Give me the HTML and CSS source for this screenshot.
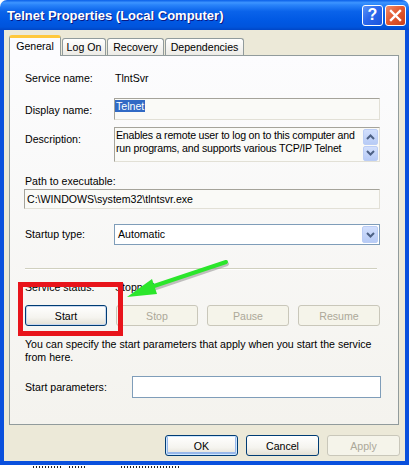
FILE: index.html
```html
<!DOCTYPE html>
<html lang="en">
<head>
  <meta charset="UTF-8" />
  <title>Telnet Properties (Local Computer)</title>
  <link rel="stylesheet" href="styles.css">
</head>
<body>
  <div class="window">
    <div class="titlebar">
      <span class="title">Telnet Properties (Local Computer)</span>
      <div class="caption-buttons">
        <span class="cap-btn help">?</span>
        <span class="cap-btn close">
          <svg width="13" height="13" viewBox="0 0 13 13"><path d="M2 2 L11 11 M11 2 L2 11" stroke="#fff" stroke-width="2.4" stroke-linecap="square"/></svg>
        </span>
      </div>
    </div>

    <div class="client">
      <div class="tabs">
        <div class="tab active">General</div>
        <div class="tab logon">Log On</div>
        <div class="tab recovery">Recovery</div>
        <div class="tab deps">Dependencies</div>
      </div>

      <div class="panel">
        <div class="row row-service">
          <span class="label">Service name:</span>
          <span class="value">TlntSvr</span>
        </div>

        <div class="row row-display">
          <span class="label label-top">Display name:</span>
          <div class="field field-display"><span class="selected">Telnet</span></div>
        </div>

        <div class="row row-desc">
          <span class="label label-top">Description:</span>
          <div class="field field-desc">
            <div class="desc-text">Enables a remote user to log on to this computer and run programs, and supports various TCP/IP Telnet</div>
            <div class="scroller">
              <span class="scroll-btn">
                <svg width="9" height="6" viewBox="0 0 9 6"><path d="M1 5 L4.5 1.5 L8 5" fill="none" stroke="#4D6185" stroke-width="2"/></svg>
              </span>
              <span class="scroll-btn">
                <svg width="9" height="6" viewBox="0 0 9 6"><path d="M1 1 L4.5 4.5 L8 1" fill="none" stroke="#4D6185" stroke-width="2"/></svg>
              </span>
            </div>
          </div>
        </div>

        <div class="row row-path-label">Path to executable:</div>
        <div class="field field-path">C:\WINDOWS\system32\tlntsvr.exe</div>

        <div class="row row-startup">
          <span class="label">Startup type:</span>
          <div class="select">
            <span>Automatic</span>
            <span class="drop-btn">
              <svg width="9" height="6" viewBox="0 0 9 6"><path d="M1 1 L4.5 4.5 L8 1" fill="none" stroke="#4D6185" stroke-width="2"/></svg>
            </span>
          </div>
        </div>

        <div class="separator"></div>

        <div class="row row-status">
          <span class="label">Service status:</span>
          <span class="value">Stopped</span>
        </div>

        <div class="row row-buttons">
          <button class="btn btn-focus">Start</button>
          <button class="btn" disabled>Stop</button>
          <button class="btn" disabled>Pause</button>
          <button class="btn" disabled>Resume</button>
        </div>

        <p class="hint">You can specify the start parameters that apply when you start the service from here.</p>

        <div class="row row-params">
          <span class="label label-wide">Start parameters:</span>
          <div class="input"></div>
        </div>
      </div>

      <div class="footer">
        <button class="btn btn-default">OK</button>
        <button class="btn">Cancel</button>
        <button class="btn" disabled>Apply</button>
      </div>
    </div>

    <div class="highlight-box"></div>
    <svg class="callout" width="409" height="468" viewBox="0 0 409 468">
      <path d="M227 264 L150 290" stroke="#7a7a7a" stroke-opacity="0.45" stroke-width="4" stroke-linecap="round"/>
      <path d="M226 262 L148 288" stroke="#2BE62B" stroke-width="4" stroke-linecap="round"/>
      <polygon points="127,297 152,279 157,294" fill="#2BE62B"/>
    </svg>
  </div>

  <div class="behind">
    <span class="frag frag-a"></span>
    <span class="frag frag-b"></span>
    <span class="frag frag-c"></span>
  </div>
</body>
</html>
```

FILE: styles.css
```css
* {
  box-sizing: border-box;
}

body {
  margin: 0;
  background: #fff;
  font-family: "Liberation Sans", Arial, sans-serif;
  font-size: 10.6px;
  color: #000;
}

.window {
  position: relative;
  width: 409px;
}

/* title bar */
.titlebar {
  height: 30px;
  border-radius: 7px 7px 0 0;
  background: linear-gradient(to bottom, #0A5FE8 0%, #3D95FF 9%, #2A84FA 16%, #0A63EA 38%, #0058E3 70%, #0054DC 90%, #0046C6 100%);
  display: flex;
  align-items: center;
  justify-content: space-between;
  padding: 0 3px 0 7px;
}

.title {
  color: #fff;
  font-weight: bold;
  font-size: 13px;
  text-shadow: 1px 1px 0 #0A1883;
}

.caption-buttons {
  display: flex;
  gap: 2px;
}

.cap-btn {
  width: 21px;
  height: 21px;
  border: 1px solid #fff;
  border-radius: 3px;
  display: flex;
  align-items: center;
  justify-content: center;
}

.help {
  background: linear-gradient(135deg, #5B93F7 0%, #2C68EC 45%, #1A55DD 100%);
  color: #fff;
  font-weight: bold;
  font-size: 16px;
}

.close {
  background: linear-gradient(135deg, #F08C6C 0%, #E35B32 45%, #C8401A 100%);
}

/* dialog body */
.client {
  height: 435px;
  background: #ECE9D8;
  border: 4px solid #0A50DD;
  border-top: 0;
  padding-top: 5px;
}

.tabs {
  display: flex;
  align-items: flex-end;
  height: 21px;
  padding-left: 5px;
  position: relative;
  z-index: 1;
}

.tab {
  height: 17px;
  margin-bottom: 1px;
  margin-left: 1px;
  border: 1px solid #919B9C;
  border-bottom: 0;
  border-radius: 3px 3px 0 0;
  background: linear-gradient(to bottom, #fff, #ECEBE6);
  display: flex;
  align-items: center;
  justify-content: center;
}

.tab.active {
  width: 52px;
  height: 21px;
  margin: 0;
  border-top: 3px solid #FFC83C;
  background: #FCFCFE;
  padding-bottom: 2px;
}

.logon {
  width: 44px;
}

.recovery {
  width: 57px;
}

.deps {
  width: 79px;
}

.panel {
  width: 390px;
  height: 370px;
  margin: -1px 0 0 5px;
  border: 1px solid #919B9C;
  background: linear-gradient(to bottom, #FCFCFE, #F4F3EE);
  padding: 0 18px 0 15px;
}

.row {
  display: flex;
  line-height: 13px;
}

.label {
  width: 89px;
  flex: none;
}

.label-top {
  padding-top: 6px;
}

.label-wide {
  width: 107px;
  padding-top: 5px;
}

.value {
  padding-left: 1px;
}

.row-service {
  margin-top: 16px;
}

.row-display {
  margin-top: 13px;
}

.row-desc {
  margin-top: 7px;
}

.row-path-label {
  margin-top: 13px;
}

.field {
  border: 1px solid;
  border-color: #A5A39A #E2E0D6 #E2E0D6 #A5A39A;
  background: #FAFAF7;
}

.field-display {
  flex: 1;
  height: 22px;
  padding-top: 1px;
}

.selected {
  background: #316AC5;
  color: #fff;
  padding: 0 1px;
}

.field-desc {
  flex: 1;
  height: 35px;
  display: flex;
  padding: 1px 0 0 1px;
  overflow: hidden;
}

.desc-text {
  flex: 1;
  letter-spacing: -0.2px;
  margin-right: -3px;
  height: 26px;
  overflow: hidden;
}

.scroller {
  width: 16px;
  flex: none;
  display: flex;
  flex-direction: column;
  gap: 1px;
  padding-right: 1px;
  position: relative;
}

.scroll-btn,
.drop-btn {
  display: flex;
  align-items: center;
  justify-content: center;
  background: linear-gradient(to bottom, #D2DFFD, #B7CBF6);
  border: 1px solid #BBCDF5;
  border-radius: 2px;
}

.scroll-btn {
  height: 16px;
}

.field-path {
  margin: 1px 0 0 -1px;
  height: 20px;
  line-height: 18px;
  padding-left: 2px;
}

.row-startup {
  margin-top: 15px;
  align-items: center;
}

.select {
  flex: 1;
  height: 21px;
  border: 1px solid #7F9DB9;
  background: #fff;
  display: flex;
  align-items: center;
  justify-content: space-between;
  padding: 1px 1px 1px 3px;
}

.drop-btn {
  width: 16px;
  height: 17px;
}

.separator {
  margin-top: 23px;
  margin-right: 3px;
  height: 2px;
  border-top: 1px solid #D0D0BF;
  border-bottom: 1px solid #fff;
}

.row-status {
  margin-top: 11px;
}

.row-buttons {
  margin-top: 11px;
  justify-content: space-between;
}

.btn {
  width: 82px;
  height: 21px;
  font-family: inherit;
  font-size: 10.6px;
  color: #000;
  border: 1px solid #003C74;
  border-radius: 3px;
  background: linear-gradient(to bottom, #FFFFFF 0%, #F5F4EF 60%, #E3E0D5 100%);
  padding: 0;
}

.btn-focus {
  box-shadow: inset 0 0 0 1px #C9D8EE;
}

.btn:disabled {
  color: #ACA899;
  border-color: #C9C7BA;
  background: #F5F4EA;
}

.hint {
  margin: 12px 0 0;
  line-height: 13px;
}

.row-params {
  margin-top: 12px;
}

.input {
  flex: 1;
  height: 22px;
  border: 1px solid #7F9DB9;
  background: #fff;
  margin-right: -1px;
}

.footer {
  margin-top: 10px;
  display: flex;
  justify-content: flex-end;
  gap: 8px;
  padding-right: 5px;
}

.footer .btn {
  width: 73px;
}

.btn-default {
  box-shadow: inset 0 0 0 1px #CEE7FF, inset 0 -1px 0 2px #98B8EA;
}

/* annotations drawn over the dialog */
.highlight-box {
  position: absolute;
  left: 18px;
  top: 282px;
  width: 105px;
  height: 54px;
  border: 5px solid #E8141B;
}

.callout {
  position: absolute;
  left: 0;
  top: 0;
  pointer-events: none;
}

/* bits of the window lying behind */
.behind {
  height: 3px;
  display: flex;
  align-items: flex-end;
}

.frag {
  height: 2px;
  background: repeating-linear-gradient(to right, #222 0 1px, transparent 1px 3px);
}

.frag-a {
  width: 28px;
  margin-left: 33px;
}

.frag-b {
  width: 18px;
  margin-left: 8px;
}

.frag-c {
  width: 60px;
  margin-left: 34px;
}
```
